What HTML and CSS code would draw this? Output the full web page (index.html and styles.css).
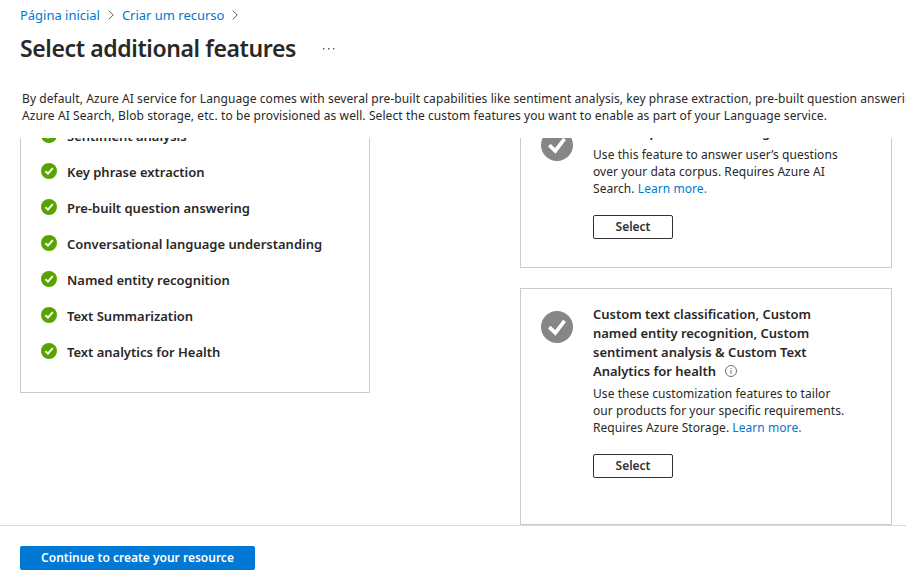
FILE: index.html
```html
<!DOCTYPE html>
<html lang="en">
<head>
<meta charset="utf-8">
<title>Select additional features</title>
<link rel="stylesheet" href="styles.css">
</head>
<body>
<svg class="defs" aria-hidden="true">
  <symbol id="ok" viewBox="0 0 16 16"><circle cx="8" cy="8" r="8" fill="#57a300"/><path d="M4.4 8.2 7 10.7l4.8-5.5" fill="none" stroke="#fff" stroke-width="1.9"/></symbol>
  <symbol id="pick" viewBox="0 0 32 32"><circle cx="16" cy="16" r="16" fill="#868686"/><path d="M8.3 16.1l6 5.8 9.2-12" fill="none" stroke="#fff" stroke-width="3.7"/></symbol>
  <symbol id="chev" viewBox="0 0 6 10"><path d="M.7.6 5.2 5 .7 9.4" fill="none" stroke="#605e5c" stroke-width="1"/></symbol>
</svg>
<div class="page">
  <nav class="crumbs">
    <a>Página inicial</a><svg class="chev"><use href="#chev"/></svg>
    <a>Criar um recurso</a><svg class="chev"><use href="#chev"/></svg>
  </nav>
  <header class="heading">
    <h1>Select additional features</h1>
    <svg class="more" viewBox="0 0 12 2"><path d="M0 0h1.4v1.4H0zM5 0h1.4v1.4H5zM10 0h1.4v1.4H10z" fill="#605e5c"/></svg>
  </header>
  <div class="intro">
    <p>By default, Azure AI service for Language comes with several pre-built capabilities like sentiment analysis, key phrase extraction, pre-built question answering</p>
    <p class="intro-second">Azure AI Search, Blob storage, etc. to be provisioned as well. Select the custom features you want to enable as part of your Language service.</p>
  </div>
  <main class="scroll">
    <div class="columns">
      <ul class="included">
        <li><svg><use href="#ok"/></svg><span>Sentiment analysis</span></li>
        <li><svg><use href="#ok"/></svg><span>Key phrase extraction</span></li>
        <li><svg><use href="#ok"/></svg><span>Pre-built question answering</span></li>
        <li><svg><use href="#ok"/></svg><span>Conversational language understanding</span></li>
        <li><svg><use href="#ok"/></svg><span>Named entity recognition</span></li>
        <li><svg><use href="#ok"/></svg><span>Text Summarization</span></li>
        <li><svg><use href="#ok"/></svg><span>Text analytics for Health</span></li>
      </ul>
      <div class="custom">
        <section class="card card-qa">
          <svg class="pick"><use href="#pick"/></svg>
          <div class="card-body">
            <h2>Custom question answering</h2>
            <p>Use this feature to answer user’s questions<br>over your data corpus. Requires Azure AI<br>Search. <a>Learn more.</a></p>
            <button>Select</button>
          </div>
        </section>
        <section class="card card-text">
          <svg class="pick"><use href="#pick"/></svg>
          <div class="card-body">
            <h2>Custom text classification, Custom<br>named entity recognition, Custom<br>sentiment analysis &amp; Custom Text<br>Analytics for health<svg class="info" viewBox="0 0 12 12"><circle cx="6" cy="6" r="5.5" fill="none" stroke="#605e5c" stroke-width=".9"/><path d="M6 5v4M6 3v1" stroke="#605e5c" stroke-width=".9"/></svg></h2>
            <p>Use these customization features to tailor<br>our products for your specific requirements.<br>Requires Azure Storage. <a>Learn more.</a></p>
            <button>Select</button>
          </div>
        </section>
      </div>
    </div>
  </main>
  <footer><button class="primary">Continue to create your resource</button></footer>
</div>
</body>
</html>
```
FILE: styles.css
```css
* { box-sizing: border-box; }
body {
  margin: 0;
  background: #fff;
  color: #292827;
  font-family: "Noto Sans", "Open Sans", sans-serif;
  font-size: 12px;
  overflow: hidden;
}
h1, h2, p, ul { margin: 0; padding: 0; }
svg { flex: none; display: block; }
a { color: #0078d4; }
.defs { display: none; }
.page { display: flex; flex-direction: column; width: 906px; height: 584px; overflow: hidden; }
.page > * { flex: none; }

.crumbs { display: flex; align-items: center; height: 31px; padding: 0 20px 1px; font-size: 13px; line-height: 18px; }
.crumbs a { letter-spacing: -.02px; }
.chev { width: 6px; height: 10px; margin: 0 8px; }

.heading { display: flex; align-items: center; height: 35px; padding-left: 20px; }
h1 { font-size: 23px; font-weight: 600; line-height: 33px; letter-spacing: -.39px; }
.more { width: 12px; height: 2px; margin-left: 27px; }

.intro { height: 72px; padding: 24px 0 0 22px; line-height: 17px; white-space: nowrap; letter-spacing: .079px; }
.intro-second { letter-spacing: .093px; }

.scroll { height: 387px; overflow: hidden; }
.columns { display: flex; justify-content: space-between; align-items: flex-start; margin-top: -32px; padding: 0 14px 0 20px; }
.included { width: 350px; height: 287px; padding: 11px 20px 0; border: 1px solid #cccccc; list-style: none; }
.included li { display: flex; align-items: center; height: 36px; gap: 10px; font-size: 13px; font-weight: 600; letter-spacing: -.01px; }
.included svg { width: 16px; height: 16px; margin-top: -2px; }

.custom { display: flex; flex-direction: column; gap: 20px; width: 372px; }
.card { display: flex; gap: 20px; padding: 16px 20px 0; border: 1px solid #cccccc; }
.card-qa { height: 162px; }
.card-text { height: 237px; }
.pick { width: 32px; height: 32px; margin-top: 6px; }
h2 { font-size: 13px; font-weight: 600; line-height: 19px; letter-spacing: -.02px; }
.info { display: inline-block; width: 12px; height: 12px; margin-left: 9px; vertical-align: -1px; }
.card p { margin-top: 4px; line-height: 17px; letter-spacing: .06px; white-space: nowrap; }
button { display: block; font: 600 12px/18px "Noto Sans", sans-serif; border-radius: 2px; }
.card button { width: 80px; height: 24px; margin-top: 18px; padding: 0; border: 1px solid #323130; background: #fff; color: #323130; }

footer { height: 59px; padding: 20px 20px 0; border-top: 1px solid #dcdbda; }
.primary { width: 235px; height: 24px; padding: 0; border: 0; background: #0078d4; color: #fff; }
```
